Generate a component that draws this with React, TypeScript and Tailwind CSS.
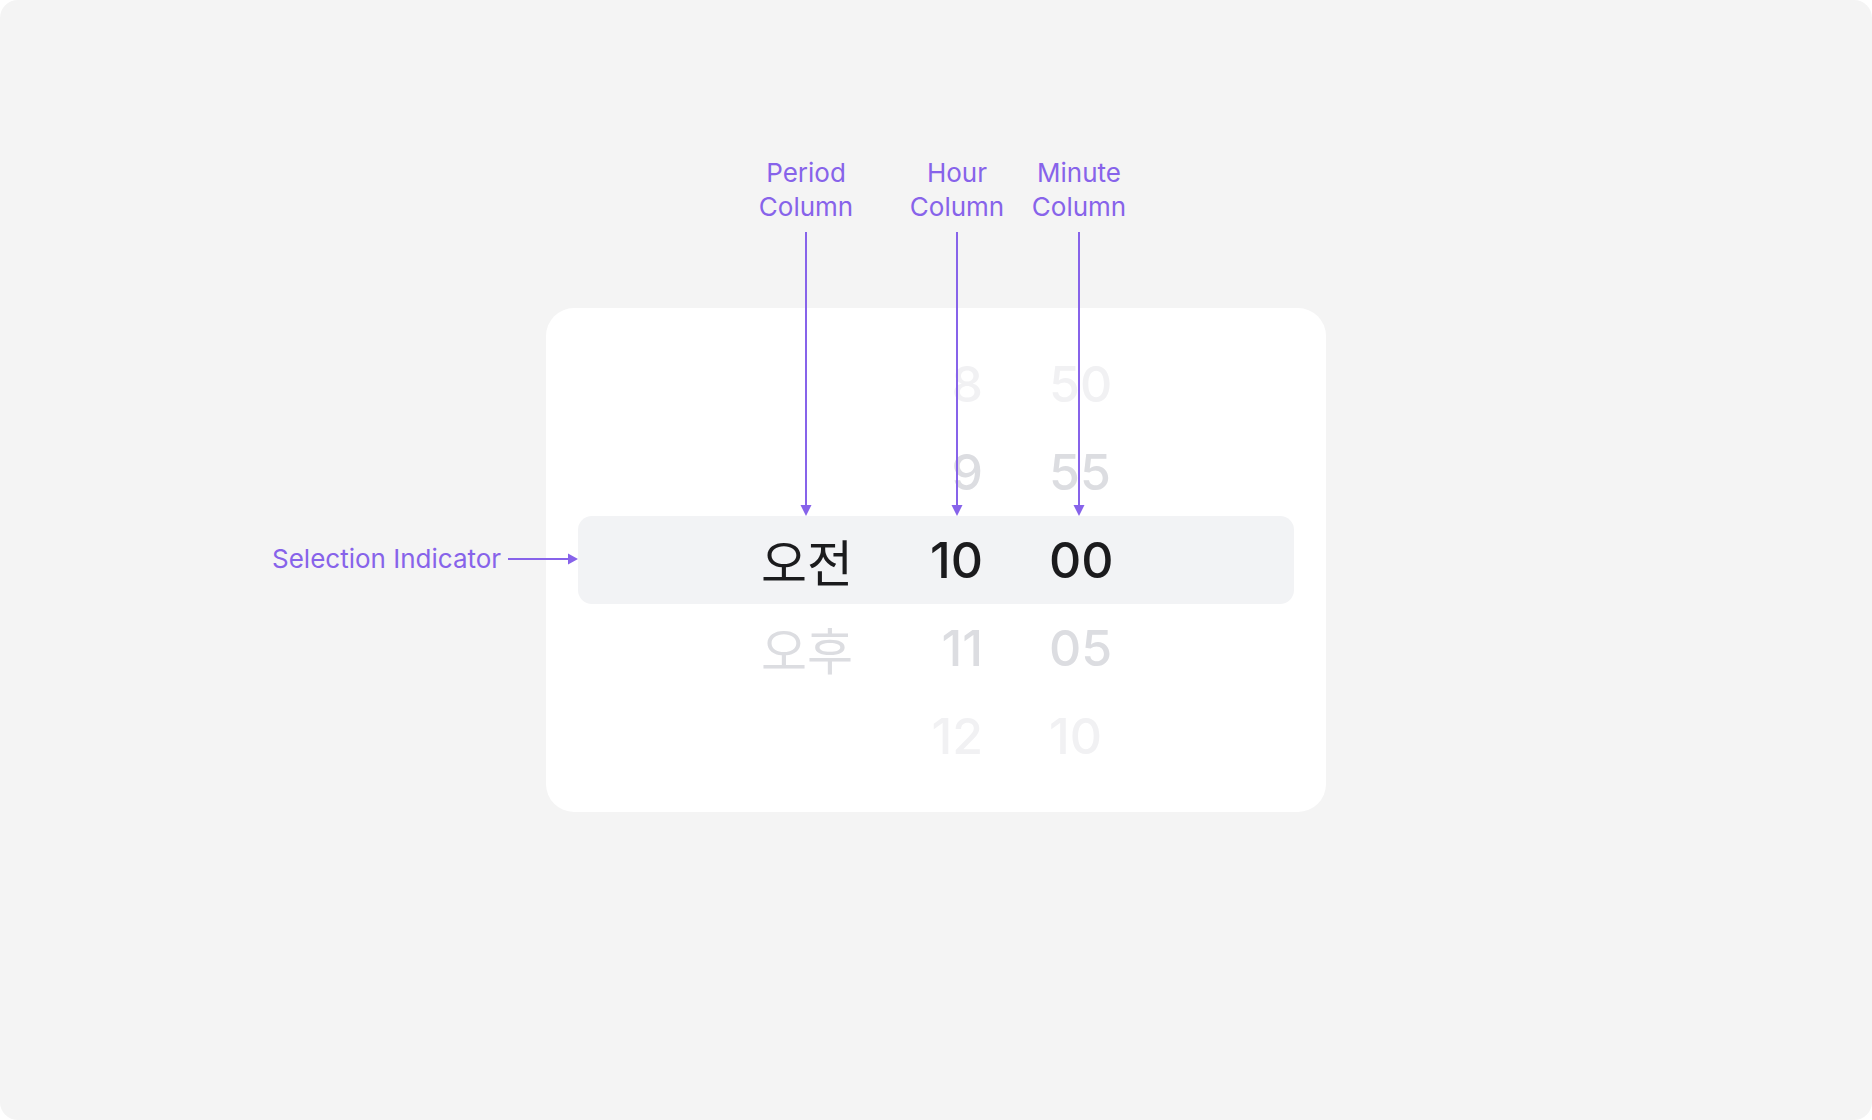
type Tone = 'selected' | 'near' | 'far'

type WheelItem = {
  period: string
  hour: string
  minute: string
  tone: Tone
}

const items: WheelItem[] = [
  { period: '', hour: '8', minute: '50', tone: 'far' },
  { period: '', hour: '9', minute: '55', tone: 'near' },
  { period: '오전', hour: '10', minute: '00', tone: 'selected' },
  { period: '오후', hour: '11', minute: '05', tone: 'near' },
  { period: '', hour: '12', minute: '10', tone: 'far' },
]

const toneClass: Record<Tone, string> = {
  selected: 'text-[#1b1b1d]',
  near: 'text-[#dcdde1]',
  far: 'text-[#f1f1f3]',
}

function WheelRow({ item }: { item: WheelItem }) {
  const selected = item.tone === 'selected'
  return (
    <div
      className={
        selected
          ? 'flex h-[88px] items-center mx-8 rounded-[14px] bg-[#f2f3f5] pl-[179px] ' + toneClass[item.tone]
          : 'flex h-[88px] items-center pl-[211px] ' + toneClass[item.tone]
      }
    >
      <div className="w-[100px] text-center text-[50px] leading-none font-normal font-['Noto_Sans_CJK_KR',sans-serif]">
        {item.period}
      </div>
      <div className="ml-[26px] w-[100px] text-right text-[50px] leading-none font-medium">
        {item.hour}
      </div>
      <div className="ml-[66px] w-[100px] text-left text-[50px] leading-none font-medium">
        {item.minute}
      </div>
    </div>
  )
}

// column labels with their x centres
const labels = [
  { top: 'Period', x: 806 },
  { top: 'Hour', x: 957 },
  { top: 'Minute', x: 1079 },
]

function Annotations() {
  return (
    <>
      {labels.map((l) => (
        <div
          key={l.top}
          className="absolute top-[156px] w-[160px] text-center text-[26px] leading-[34px] text-[#8763ea]"
          style={{ left: l.x - 80 }}
        >
          {l.top}
          <br />
          Column
        </div>
      ))}
      <div className="absolute left-[272px] top-[542px] text-[26px] leading-[34px] text-[#8763ea]">
        Selection Indicator
      </div>
      <svg className="pointer-events-none absolute inset-0" width="1872" height="1120" viewBox="0 0 1872 1120">
        {labels.map((l) => (
          <g key={l.top}>
            <line x1={l.x} y1={232} x2={l.x} y2={506} stroke="#8763ea" strokeWidth={2} />
            <polygon points={`${l.x - 5.5},505 ${l.x + 5.5},505 ${l.x},516`} fill="#8763ea" />
          </g>
        ))}
        <line x1={508} y1={559} x2={569} y2={559} stroke="#8763ea" strokeWidth={2} />
        <polygon points="568,553.5 568,564.5 578,559" fill="#8763ea" />
      </svg>
    </>
  )
}

export default function App() {
  return (
    <div className="w-[1872px] h-[1120px] bg-white font-['Inter','Noto_Sans_CJK_KR',sans-serif]">
      <div className="relative flex h-full items-center justify-center rounded-[18px] bg-[#f4f4f4]">
        {/* time wheel card */}
        <div className="w-[780px] h-[504px] rounded-[28px] bg-white py-8">
          {items.map((item) => (
            <WheelRow key={item.hour} item={item} />
          ))}
        </div>
        <Annotations />
      </div>
    </div>
  )
}
